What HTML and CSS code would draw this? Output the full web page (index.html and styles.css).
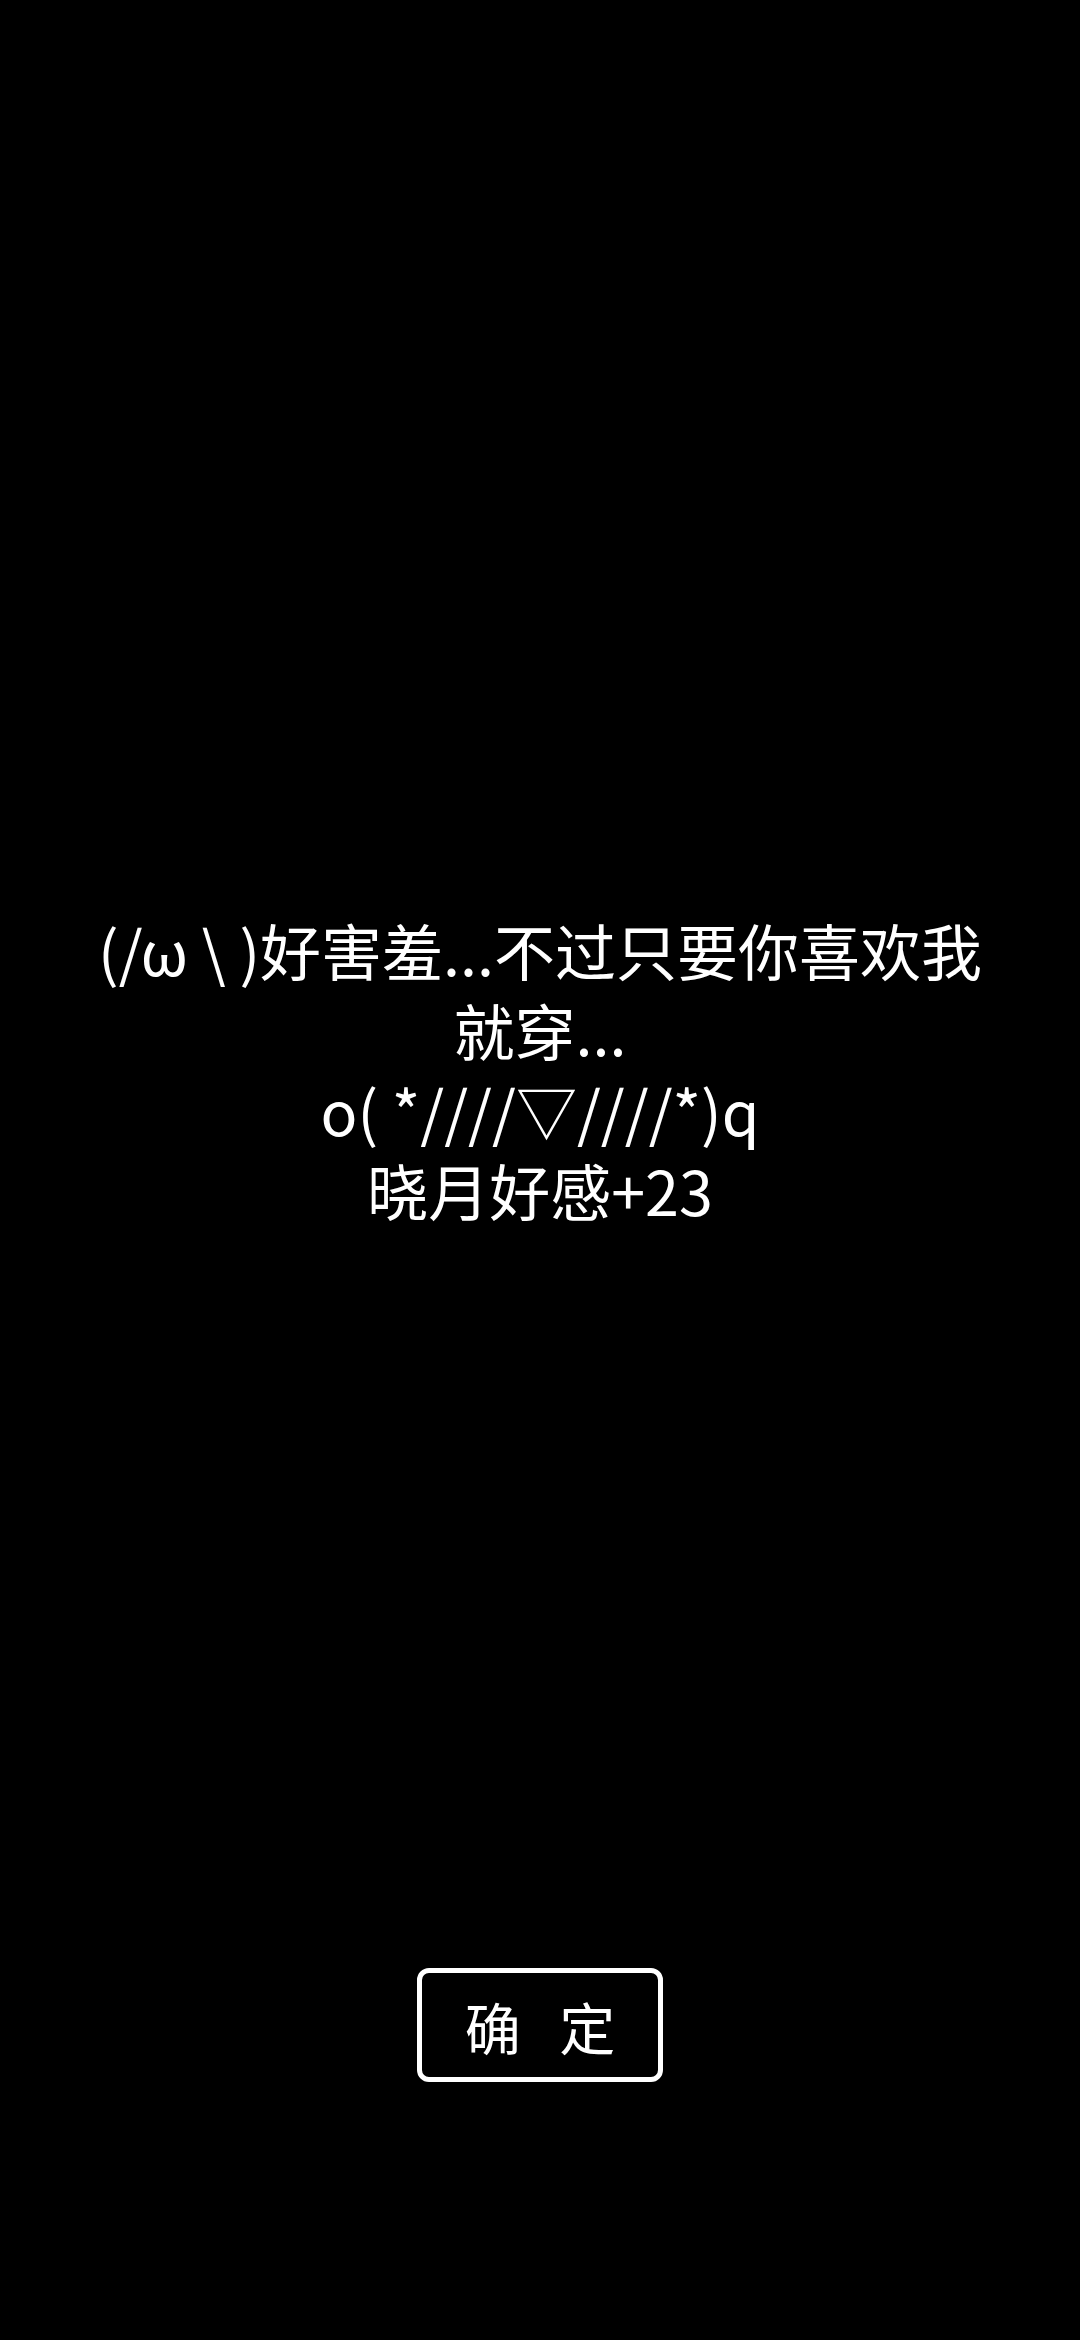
FILE: index.html
```html
<!DOCTYPE html>
<html lang="zh-CN">
<head>
    <meta charset="UTF-8">
    <meta name="viewport" content="width=device-width, initial-scale=1.0">
    <title>好感</title>
    <link rel="stylesheet" href="styles.css">
</head>
<body>
    <div class="screen">
        <p class="message">(/ω \ )好害羞...不过只要你喜欢我就穿...<br>o( *////▽////*)q<br>晓月好感+23</p>
        <button class="confirm-btn">确 定</button>
    </div>
</body>
</html>
```

FILE: styles.css
```css
html, body {
    margin: 0;
    padding: 0;
    background: #000;
}
body {
    font-family: "Noto Sans CJK SC", "Noto Sans", sans-serif;
    color: #fff;
}
.screen {
    width: 1080px;
    height: 2340px;
    display: flex;
    flex-direction: column;
    align-items: center;
}
.message {
    width: 920px;
    margin: 910px 0 0;
    font-size: 61px;
    line-height: 80px;
    text-align: center;
}
.confirm-btn {
    margin-top: 738px;
    width: 246px;
    height: 114px;
    box-sizing: border-box;
    background: #000;
    color: #fff;
    border: 5px solid #fff;
    border-radius: 12px;
    font-family: inherit;
    font-size: 56px;
    letter-spacing: 13px;
    padding: 0 0 0 13px;
    cursor: pointer;
}
```
